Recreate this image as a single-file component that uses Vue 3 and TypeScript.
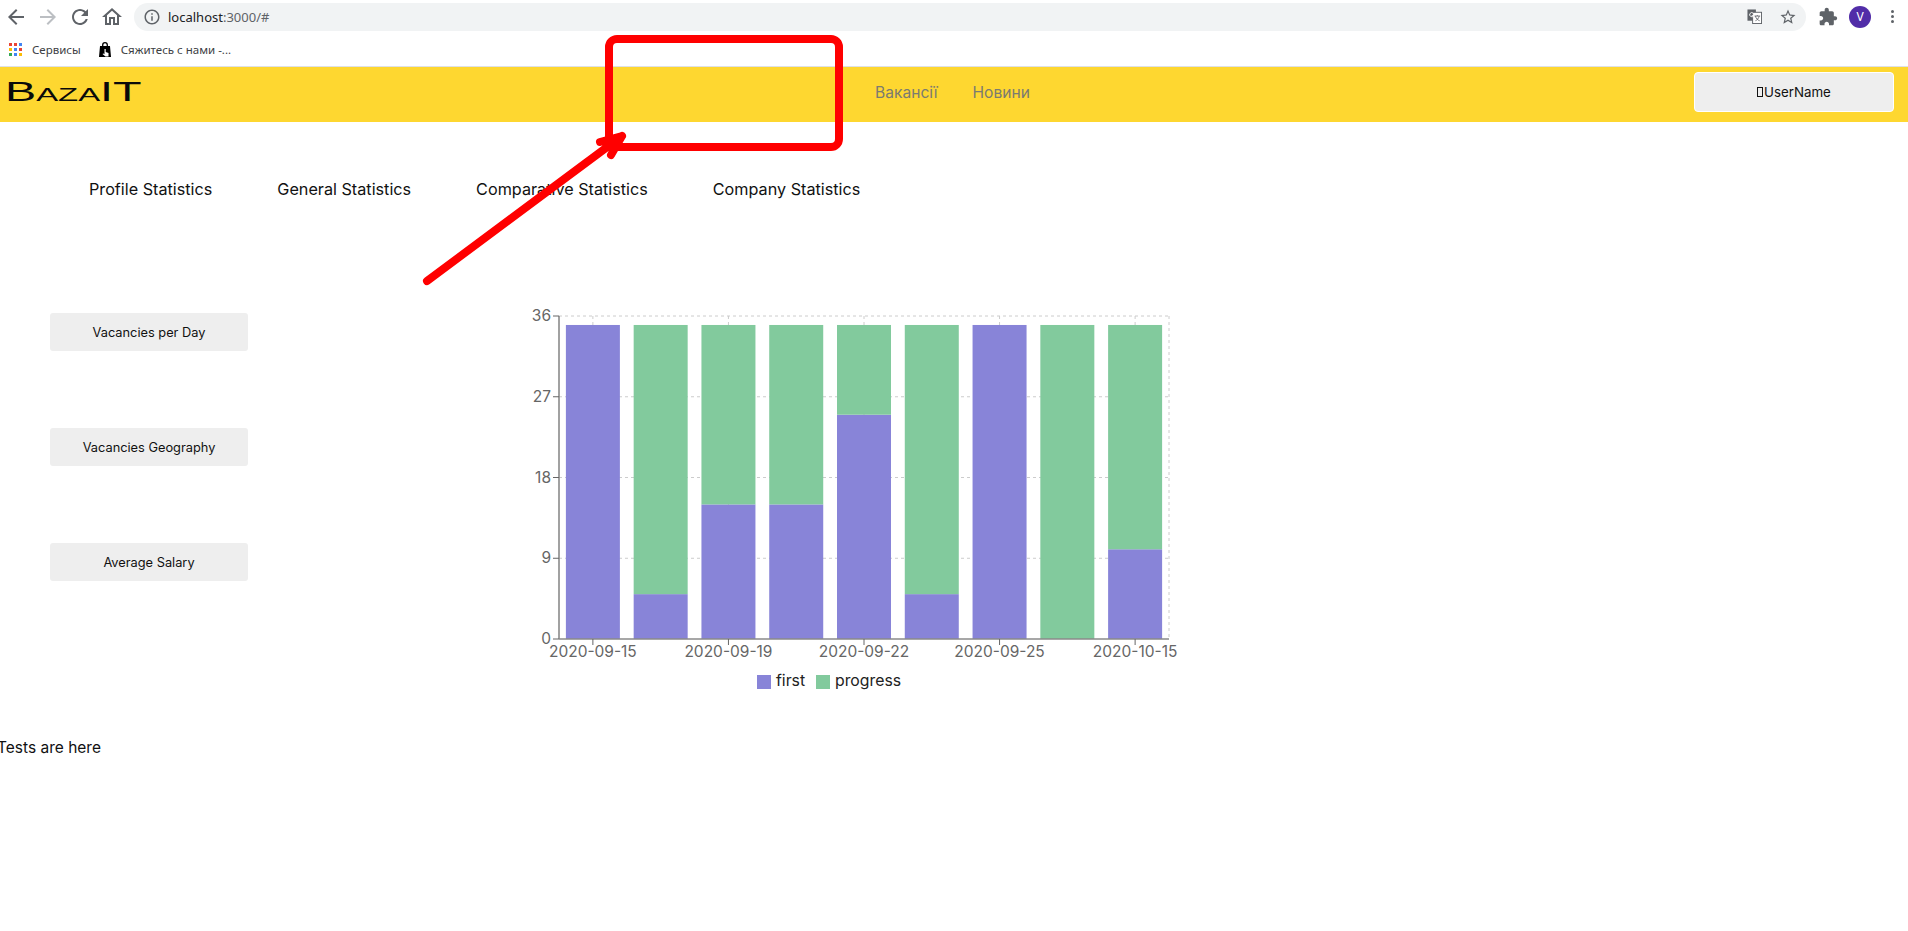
<script setup lang="ts">
interface Bar { date: string; first: number; progress: number }
const bars: Bar[] = [
  { date: '2020-09-15', first: 35, progress: 0 },
  { date: '2020-09-17', first: 5, progress: 30 },
  { date: '2020-09-19', first: 15, progress: 20 },
  { date: '2020-09-20', first: 15, progress: 20 },
  { date: '2020-09-22', first: 25, progress: 10 },
  { date: '2020-09-23', first: 5, progress: 30 },
  { date: '2020-09-25', first: 35, progress: 0 },
  { date: '2020-09-26', first: 0, progress: 35 },
  { date: '2020-10-15', first: 10, progress: 25 },
]
const left = 29
const right = 639
const top = 16
const bottom = 339
const unit = (bottom - top) / 36
const step = (right - left) / bars.length
const cx = (i: number) => left + step * (i + 0.5)
const yTicks = [0, 9, 18, 27, 36]
const y = (v: number) => bottom - v * unit
const tabs = ['Profile Statistics', 'General Statistics', 'Comparative Statistics', 'Company Statistics']
const side = ['Vacancies per Day', 'Vacancies Geography', 'Average Salary']
const apps = ['#ea4335', '#ea4335', '#4285f4', '#fbbc04', '#4285f4', '#ea4335', '#34a853', '#4285f4', '#fbbc04']
</script>

<template>
  <div class="page">
    <div class="browser">
      <div class="toolbar">
        <svg class="nav-ic" viewBox="0 0 24 24"><path fill="#5f6368" d="M20 11H7.83l5.59-5.59L12 4l-8 8 8 8 1.41-1.41L7.83 13H20v-2z"/></svg>
        <svg class="nav-ic" viewBox="0 0 24 24"><path fill="#bcbfc3" d="M12 4l-1.41 1.41L16.17 11H4v2h12.17l-5.58 5.59L12 20l8-8z"/></svg>
        <svg class="nav-ic" viewBox="0 0 24 24"><path fill="#5f6368" d="M17.65 6.35C16.2 4.9 14.21 4 12 4c-4.42 0-7.99 3.58-7.99 8s3.57 8 7.99 8c3.73 0 6.84-2.55 7.73-6h-2.08c-.82 2.33-3.04 4-5.65 4-3.31 0-6-2.69-6-6s2.69-6 6-6c1.66 0 3.14.69 4.22 1.78L13 11h7V4l-2.35 2.35z"/></svg>
        <svg class="nav-ic" viewBox="0 0 24 24"><path fill="#5f6368" d="M12 5.69l5 4.5V18h-2v-6H9v6H7v-7.81l5-4.5M12 3L2 12h3v8h6v-6h2v6h6v-8h3L12 3z"/></svg>
        <div class="omnibox">
          <svg class="info" viewBox="0 0 24 24"><path fill="#5f6368" d="M11 7h2v2h-2zm0 4h2v6h-2zm1-9C6.48 2 2 6.48 2 12s4.48 10 10 10 10-4.48 10-10S17.52 2 12 2zm0 18c-4.41 0-8-3.59-8-8s3.59-8 8-8 8 3.59 8 8-3.59 8-8 8z"/></svg>
          <span class="url">localhost<span class="url-dim">:3000/#</span></span>
          <span class="spacer"></span>
          <svg class="trans" viewBox="0 0 16 16">
            <rect x="0.5" y="0.5" width="9" height="12" fill="#5f6368"/>
            <rect x="6" y="3.5" width="9.5" height="12" fill="#fff" stroke="#5f6368"/>
            <path d="M6.6 4.5a2.2 2.2 0 1 0 .4 2.6H5" fill="none" stroke="#fff" stroke-width="1"/>
            <path d="M8 7.5h6M11 6.5v1M9 7.5c.5 2.5 2.5 4.5 4.5 5M13 7.5c-.5 2.5-2.5 4.5-4 5" fill="none" stroke="#5f6368" stroke-width=".9"/>
          </svg>
          <svg class="star" viewBox="0 0 24 24"><path fill="#5f6368" d="M22 9.24l-7.19-.62L12 2 9.19 8.63 2 9.24l5.46 4.73L5.82 21 12 17.27 18.18 21l-1.63-7.03L22 9.24zM12 15.4l-3.76 2.27 1-4.28-3.32-2.88 4.38-.38L12 6.1l1.71 4.04 4.38.38-3.32 2.88 1 4.28L12 15.4z"/></svg>
        </div>
        <svg class="ext" viewBox="0 0 24 24"><path fill="#5f6368" d="M20.5 11H19V7c0-1.1-.9-2-2-2h-4V3.5C13 2.12 11.88 1 10.5 1S8 2.12 8 3.5V5H4c-1.1 0-1.99.9-1.99 2v3.8H3.5c1.49 0 2.7 1.21 2.7 2.7s-1.21 2.7-2.7 2.7H2V20c0 1.1.9 2 2 2h3.8v-1.5c0-1.49 1.21-2.7 2.7-2.7 1.49 0 2.7 1.21 2.7 2.7V22H17c1.1 0 2-.9 2-2v-4h1.5c1.38 0 2.5-1.12 2.5-2.5S21.88 11 20.5 11z"/></svg>
        <div class="avatar">V</div>
        <div class="dots"><i></i><i></i><i></i></div>
      </div>
      <div class="bookmarks">
        <div class="apps"><i v-for="(c, i) in apps" :key="i" :style="{ background: c }"></i></div>
        <span class="bm bm-first">Сервисы</span>
        <svg class="bag" viewBox="0 0 12 15">
          <path fill="#000" d="M1 4h10l1 11H0z"/>
          <path fill="none" stroke="#000" stroke-width="1.3" d="M3.7 6V3a2.3 2.3 0 0 1 4.6 0v3"/>
          <path fill="#fff" d="M5.5 7h1.2v3l2.8 1v3.5H6.5L3.5 12l1-.6 1 .8z"/>
        </svg>
        <span class="bm">Сяжитесь с нами -...</span>
      </div>
    </div>

    <header class="site-head">
      <div class="logo"><span>BazaIT</span></div>
      <nav class="site-nav">
        <a>Вакансії</a>
        <a>Новини</a>
      </nav>
      <button class="user"><i class="tofu"></i>UserName</button>
    </header>

    <div class="tabs">
      <span v-for="t in tabs" :key="t">{{ t }}</span>
    </div>

    <div class="main">
      <div class="side">
        <button v-for="s in side" :key="s">{{ s }}</button>
      </div>
      <svg class="chart" width="650" height="400" viewBox="0 0 650 400">
        <g stroke="#ccc" stroke-dasharray="3 3" fill="none">
          <line v-for="t in yTicks.slice(1)" :key="t" :x1="left" :x2="right" :y1="y(t)" :y2="y(t)" />
          <line v-for="(b, i) in bars" v-show="i % 2 === 0" :key="b.date" :x1="cx(i)" :x2="cx(i)" :y1="top" :y2="bottom" />
          <line :x1="right" :x2="right" :y1="top" :y2="bottom" />
        </g>
        <g v-for="(b, i) in bars" :key="b.date">
          <rect :x="cx(i) - 27" :y="y(b.first)" width="54" :height="b.first * unit" fill="#8884d8" />
          <rect :x="cx(i) - 27" :y="y(b.first + b.progress)" width="54" :height="b.progress * unit" fill="#82ca9d" />
        </g>
        <g stroke="#8a8a8a" fill="none">
          <line :x1="left" :x2="left" :y1="top" :y2="bottom" stroke-width="1.6" />
          <line :x1="left" :x2="right" :y1="bottom" :y2="bottom" stroke-width="1.6" />
          <line v-for="t in yTicks" :key="t" :x1="left - 6" :x2="left" :y1="y(t)" :y2="y(t)" stroke="#666" />
          <line v-for="(b, i) in bars" v-show="i % 2 === 0" :key="b.date" :x1="cx(i)" :x2="cx(i)" :y1="bottom" :y2="bottom + 6" stroke="#666" />
        </g>
        <g class="tick">
          <text v-for="t in yTicks" :key="t" :x="left - 8" :y="y(t) + 5" text-anchor="end">{{ t }}</text>
          <template v-for="(b, i) in bars" :key="b.date">
            <text v-if="i % 2 === 0" :x="cx(i)" :y="bottom + 18" text-anchor="middle">{{ b.date }}</text>
          </template>
        </g>
        <g class="legend">
          <rect x="227" y="375" width="14" height="14" fill="#8884d8" />
          <text x="246" y="386">first</text>
          <rect x="286" y="375" width="14" height="14" fill="#82ca9d" />
          <text x="305" y="386">progress</text>
        </g>
      </svg>
    </div>

    <p class="tests">Tests are here</p>

    <svg class="annot" width="1908" height="931" viewBox="0 0 1908 931">
      <rect x="609" y="39" width="230" height="108" rx="8" fill="none" stroke="#ff0000" stroke-width="8" />
      <path d="M427 281 L622 136 M600 142 L622 136 L611 155" fill="none" stroke="#ff0000" stroke-width="8" stroke-linecap="round" stroke-linejoin="round" />
    </svg>
  </div>
</template>

<style scoped>
.page {
  position: relative;
  width: 1908px;
  height: 931px;
  overflow: hidden;
  background: #fff;
  font-family: Inter, "Noto Sans", sans-serif;
  color: #111;
}
.browser {
  height: 66px;
  border-bottom: 1px solid #dee1e6;
}
.toolbar {
  height: 33px;
  display: flex;
  align-items: center;
}
.nav-ic {
  width: 24px;
  height: 24px;
  margin-left: 8px;
}
.nav-ic:first-child {
  margin-left: 4px;
}
.omnibox {
  width: 1672px;
  height: 28px;
  margin-left: 10px;
  border-radius: 14px;
  background: #f1f3f4;
  display: flex;
  align-items: center;
  padding: 0 9px 0 9px;
  box-sizing: border-box;
}
.info {
  width: 18px;
  height: 18px;
}
.url {
  margin-left: 7px;
  font: 13px "Noto Sans", sans-serif;
  color: #202124;
}
.url-dim {
  color: #5f6368;
}
.spacer {
  flex: 1;
}
.trans {
  width: 15px;
  height: 15px;
  margin-right: 17px;
}
.star {
  width: 18px;
  height: 18px;
}
.ext {
  width: 20px;
  height: 20px;
  margin-left: 12px;
}
.avatar {
  width: 22px;
  height: 22px;
  margin-left: 11px;
  border-radius: 50%;
  background: #512da8;
  color: #fff;
  font: 12px/22px "Noto Sans", sans-serif;
  text-align: center;
}
.dots {
  margin-left: 20px;
  display: flex;
  flex-direction: column;
  gap: 2px;
}
.dots i {
  width: 3px;
  height: 3px;
  border-radius: 50%;
  background: #5f6368;
}
.bookmarks {
  height: 33px;
  display: flex;
  align-items: center;
  font: 11.5px "Noto Sans", sans-serif;
  color: #3c4043;
}
.apps {
  width: 13px;
  margin-left: 9px;
  display: grid;
  grid-template-columns: repeat(3, 3px);
  gap: 2px;
}
.apps i {
  width: 3px;
  height: 3px;
}
.bm-first {
  margin-left: 10px;
}
.bag {
  width: 12px;
  height: 15px;
  margin-left: 18px;
  margin-right: 10px;
}
.site-head {
  height: 55px;
  background: #fed730;
  display: flex;
  align-items: center;
  position: relative;
}
.logo {
  width: 875px;
  padding: 0 0 5px 5px;
  box-sizing: border-box;
}
.logo span {
  display: inline-block;
  font: 400 27px/1 "Liberation Sans", sans-serif;
  font-variant: small-caps;
  color: #0a0a0a;
  transform: scaleX(1.73);
  transform-origin: left center;
}
.site-nav {
  display: flex;
  gap: 35px;
  padding-bottom: 5px;
  font-size: 15.6px;
  color: #7b7b70;
}
.user {
  margin: 0 14px 5px auto;
  width: 200px;
  height: 40px;
  background: #eee;
  border: 1px solid #fff;
  border-radius: 4px;
  font: 13.3px Inter, sans-serif;
  color: #111;
  display: flex;
  align-items: center;
  justify-content: center;
}
.tofu {
  width: 6px;
  height: 10px;
  border: 1px solid #111;
  margin-right: 1px;
  box-sizing: border-box;
}
.tabs {
  display: flex;
  gap: 65px;
  padding: 57px 0 0 89px;
  font-size: 16.2px;
  line-height: 20px;
  color: #111;
}
.main {
  display: flex;
  margin-top: 101px;
  height: 400px;
}
.side {
  width: 248px;
  padding: 13px 0 0 50px;
  box-sizing: border-box;
  display: flex;
  flex-direction: column;
  gap: 77px;
}
.side button {
  width: 198px;
  height: 38px;
  background: #eee;
  border: 0;
  border-radius: 3px;
  font: 12.8px Inter, sans-serif;
  color: #111;
}
.chart {
  margin-left: 282px;
  display: block;
}
.tick text {
  font: 15.5px Inter, sans-serif;
  fill: #666;
}
.legend text {
  font: 15.8px Inter, sans-serif;
  fill: #222;
}
.tests {
  margin: 38px 0 0 -3px;
  font-size: 15.5px;
  line-height: 20px;
  color: #111;
}
.annot {
  position: absolute;
  left: 0;
  top: 0;
  pointer-events: none;
}
</style>

<style>
html, body { margin: 0; background: #fff; }
</style>
